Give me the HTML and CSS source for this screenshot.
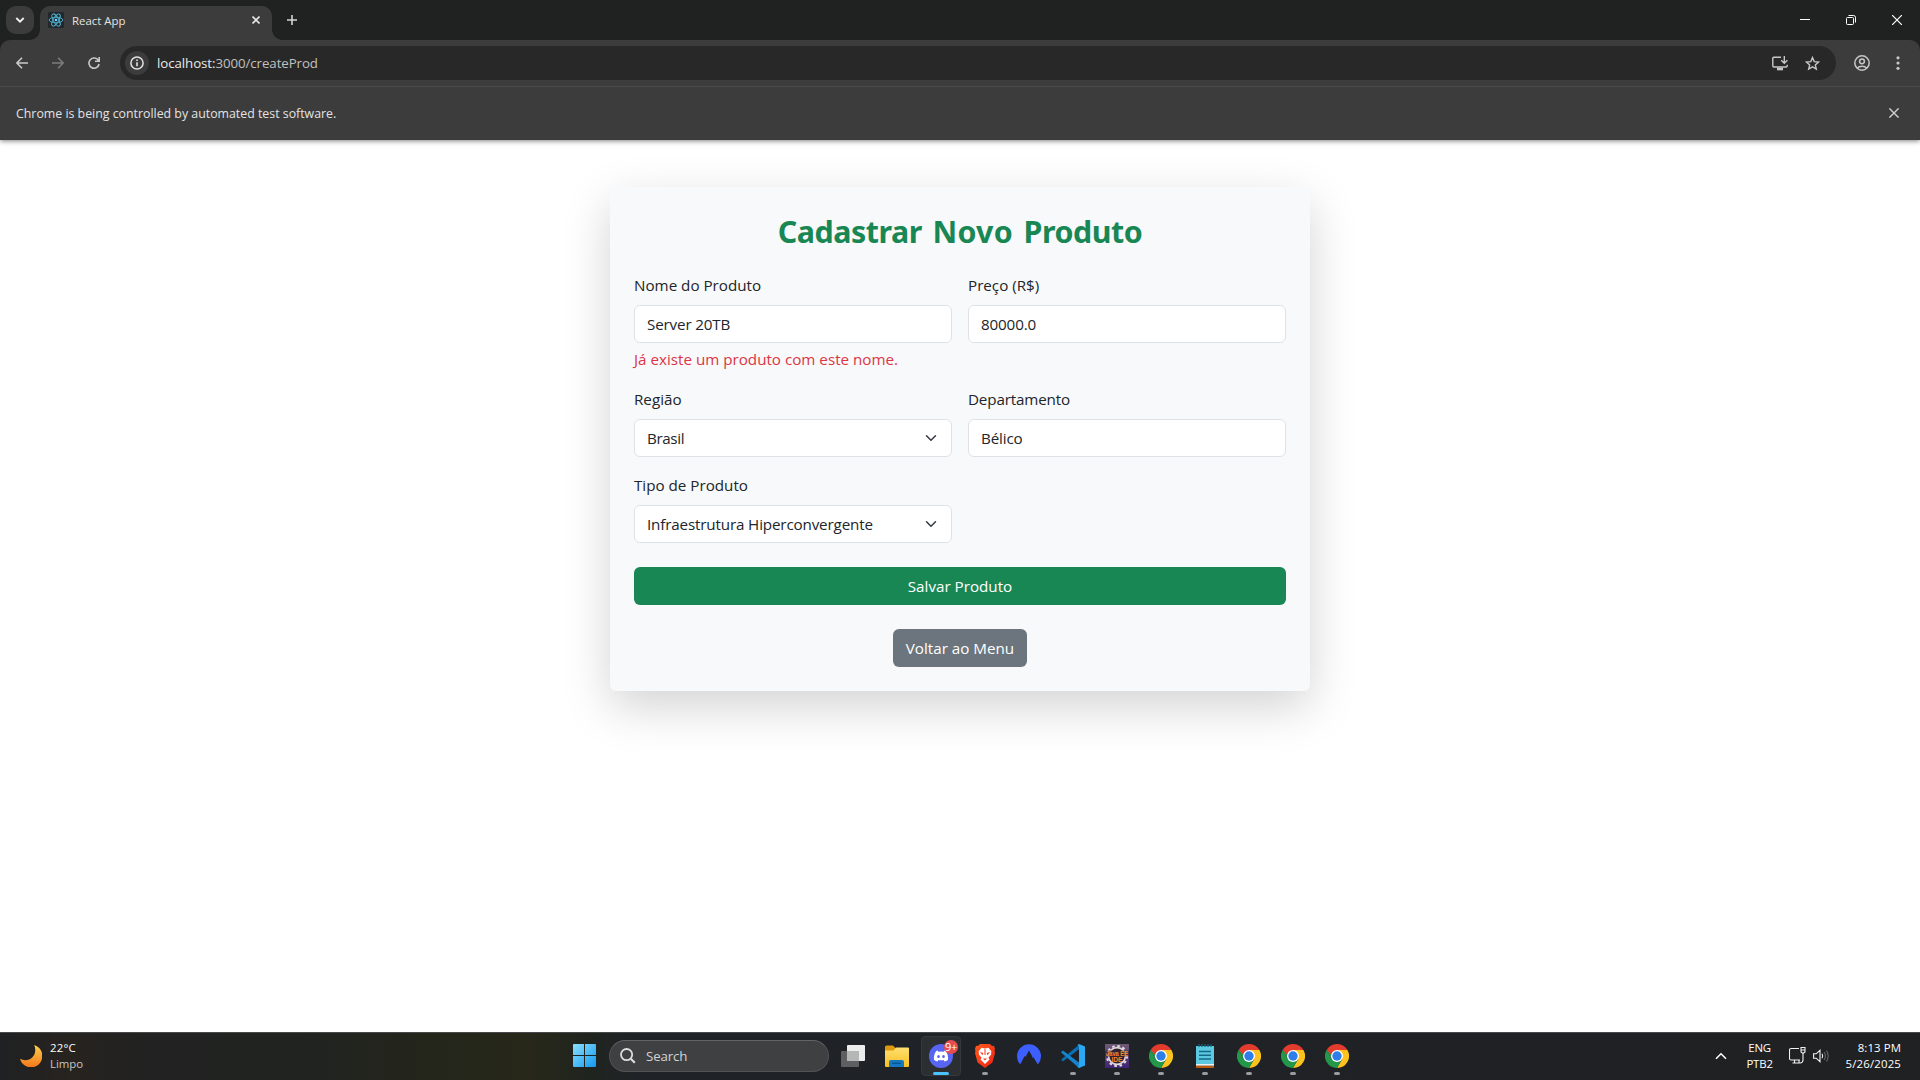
FILE: index.html
```
<!DOCTYPE html>
<html lang="pt-BR">
<head>
<meta charset="utf-8">
<title>React App</title>
<link rel="stylesheet" href="styles.css">
</head>
<body>
<svg class="defs" width="0" height="0">
  <defs>
    <linearGradient id="win" x1="0" y1="0" x2="1" y2="1"><stop offset="0" stop-color="#8ae0fd"/><stop offset="1" stop-color="#1299f0"/></linearGradient>
    <linearGradient id="moon" x1="0" y1="0" x2="0" y2="1"><stop offset="0" stop-color="#fcd04a"/><stop offset="1" stop-color="#f3771c"/></linearGradient>
    <linearGradient id="folder" x1="0" y1="0" x2="0" y2="1"><stop offset="0" stop-color="#ffdf70"/><stop offset="1" stop-color="#f9c022"/></linearGradient>
    <linearGradient id="brave" x1="0" y1="0" x2="1" y2="1"><stop offset="0" stop-color="#ff5a1f"/><stop offset="1" stop-color="#f01f12"/></linearGradient>
    <linearGradient id="java" x1="0" y1="0" x2="0" y2="1"><stop offset="0" stop-color="#6f5a74"/><stop offset="1" stop-color="#3f2476"/></linearGradient>
    <symbol id="chrome" viewBox="0 0 24 24">
      <path d="M12 6h10.4A12 12 0 0 1 12 24l5.2-9Z" fill="#fcc31e"/>
      <path d="M1.6 6A12 12 0 0 0 12 24l5.2-9L12 12 6.8 15Z" fill="#24984a"/>
      <path d="M1.6 6A12 12 0 0 1 22.4 6H12L6.8 9v6Z" fill="#e33b2e"/>
      <path d="M1.6 6 6.8 15l1-3Z" fill="#24984a"/>
      <circle cx="12" cy="12" r="6" fill="#fff"/><circle cx="12" cy="12" r="4.7" fill="#2f7de9"/>
    </symbol>
  </defs>
</svg>

<div class="desktop">
  <header class="browser">
    <div class="tabstrip">
      <button class="tab-search"><svg width="10" height="10" viewBox="0 0 10 10"><path d="M1.3 3 5 6.7 8.7 3" fill="none" stroke="#f0f0f0" stroke-width="1.9"/></svg></button>
      <div class="tab">
        <svg class="favicon" width="16" height="16" viewBox="0 0 16 16"><rect width="16" height="16" rx="1.5" fill="#22272e"/><g fill="none" stroke="#4fb6d2" stroke-width=".9"><ellipse cx="8" cy="8" rx="6.9" ry="2.7"/><ellipse cx="8" cy="8" rx="6.9" ry="2.7" transform="rotate(60 8 8)"/><ellipse cx="8" cy="8" rx="6.9" ry="2.7" transform="rotate(120 8 8)"/></g><circle cx="8" cy="8" r="1.3" fill="#61dafb"/></svg>
        <span class="tab-title">React App</span>
        <svg class="tab-close" width="8" height="8" viewBox="0 0 8 8"><path d="m.5.5 7 7m0-7-7 7" stroke="#e4e4e4" stroke-width="1.6"/></svg>
      </div>
      <svg class="new-tab" width="10" height="10" viewBox="0 0 10 10"><path d="M5 0v10M0 5h10" stroke="#d4d4d4" stroke-width="1.6"/></svg>
      <div class="window-controls">
        <svg width="10" height="10" viewBox="0 0 10 10"><path d="M0 4.5h10" stroke="#fff"/></svg>
        <svg width="10" height="10" viewBox="0 0 10 10" fill="none" stroke="#fff"><rect x=".5" y="2.5" width="7" height="7" rx="1"/><path d="M2.5.5h5a2 2 0 0 1 2 2v5"/></svg>
        <svg width="10" height="10" viewBox="0 0 10 10"><path d="m0 0 10 10M10 0 0 10" stroke="#fff" stroke-width="1.2"/></svg>
      </div>
    </div>
    <div class="toolbar">
      <svg class="nav-icon" width="12" height="12" viewBox="0 0 12 12"><path d="M12 6H1.2M6 .8.9 6 6 11.2" fill="none" stroke="#c9c9c9" stroke-width="1.6"/></svg>
      <svg class="nav-icon" width="12" height="12" viewBox="0 0 12 12"><path d="M0 6h10.8M6 .8 11.1 6 6 11.2" fill="none" stroke="#7c7c7c" stroke-width="1.6"/></svg>
      <svg class="nav-icon" width="12" height="12" viewBox="0 0 12 12"><path d="M10.4 3.4A5.1 5.1 0 1 0 11.1 7M11.2 0v4.3H7" fill="none" stroke="#c9c9c9" stroke-width="1.6"/></svg>
      <div class="omnibox">
        <span class="site-info"><svg width="14" height="14" viewBox="0 0 14 14"><circle cx="7" cy="7" r="6.1" fill="none" stroke="#e3e3e3" stroke-width="1.5"/><path d="M7 6.2v4M7 3.5V5" stroke="#e3e3e3" stroke-width="1.6"/></svg></span>
        <span class="url">localhost:<span class="url-path">3000/createProd</span></span>
        <svg width="16" height="15" viewBox="0 0 16 15" fill="none" stroke="#c7c7c7" stroke-width="1.4"><path d="M9 1.2H1.8a1 1 0 0 0-1 1V10a1 1 0 0 0 1 1h12.4a1 1 0 0 0 1-1V8.8M12.3 0v7M9.2 4.2l3.1 3.1 3.1-3.1"/><path d="M5 13h6" stroke-width="2.6"/></svg>
        <svg class="star" width="15" height="15" viewBox="0 0 15 15"><path d="m7.5 1.6 1.7 4 4.4.4-3.3 2.9 1 4.2-3.8-2.2-3.8 2.2 1-4.2L1.4 6l4.4-.4Z" fill="none" stroke="#c7c7c7" stroke-width="1.4"/></svg>
      </div>
      <svg class="profile" width="16" height="16" viewBox="0 0 16 16" fill="none" stroke="#c7c7c7" stroke-width="1.5"><circle cx="8" cy="8" r="7.2"/><circle cx="8" cy="6.3" r="2.4"/><path d="M3 13.2c2.6-2.6 7.4-2.6 10 0"/></svg>
      <svg class="menu" width="4" height="14" viewBox="0 0 4 14" fill="#c7c7c7"><circle cx="2" cy="1.8" r="1.6"/><circle cx="2" cy="7" r="1.6"/><circle cx="2" cy="12.3" r="1.6"/></svg>
    </div>
    <div class="infobar">
      <span>Chrome is being controlled by automated test software.</span>
      <svg width="10" height="10" viewBox="0 0 10 10"><path d="m.4.4 9.2 9.2m0-9.2L.4 9.6" stroke="#d0d0d0" stroke-width="1.4"/></svg>
    </div>
  </header>

  <main class="page">
    <form class="card">
      <h2 class="card-title">Cadastrar <span class="wide">Novo</span> Produto</h2>
      <div class="fields">
        <div class="field">
          <label>Nome do Produto</label>
          <div class="control">Server 20TB</div>
          <div class="error">Já existe um produto com este nome.</div>
        </div>
        <div class="field">
          <label>Preço (R$)</label>
          <div class="control">80000.0</div>
        </div>
        <div class="field">
          <label>Região</label>
          <div class="control select short">Brasil<svg width="16" height="12" viewBox="0 0 16 16"><path d="m2 5 6 6 6-6" fill="none" stroke="#343a40" stroke-width="2" stroke-linecap="round" stroke-linejoin="round"/></svg></div>
        </div>
        <div class="field">
          <label class="tight">Departamento</label>
          <div class="control">Bélico</div>
        </div>
        <div class="field">
          <label>Tipo de Produto</label>
          <div class="control select">Infraestrutura Hiperconvergente<svg width="16" height="12" viewBox="0 0 16 16"><path d="m2 5 6 6 6-6" fill="none" stroke="#343a40" stroke-width="2" stroke-linecap="round" stroke-linejoin="round"/></svg></div>
        </div>
      </div>
      <button type="button" class="btn btn-save">Salvar Produto</button>
      <button type="button" class="btn btn-back">Voltar ao Menu</button>
    </form>
  </main>

  <footer class="taskbar">
    <div class="weather">
      <svg width="22" height="22" viewBox="0 0 22 22"><path d="M14.2 0A11.4 11.4 0 1 1 0 13.8C4 16.2 9.4 15.5 12.6 12 15.6 8.6 16 4 14.2 0Z" fill="url(#moon)"/></svg>
      <div class="weather-text"><span class="temp">22°C</span><span class="sky">Limpo</span></div>
    </div>
    <div class="apps">
      <div class="app start"><svg width="23" height="23" viewBox="0 0 23 23" fill="url(#win)"><path d="M0 1a1 1 0 0 1 1-1h10v11H0ZM12 0h10a1 1 0 0 1 1 1v10H12ZM0 12h11v11H1a1 1 0 0 1-1-1ZM12 12h11v10a1 1 0 0 1-1 1H12Z"/></svg></div>
      <div class="search"><svg width="16" height="16" viewBox="0 0 16 16" fill="none" stroke="#dcdcdc" stroke-width="1.8"><circle cx="6.6" cy="6.6" r="5.6"/><path d="m10.8 10.8 4 4" stroke-width="2.2"/></svg><span>Search</span></div>
      <div class="app"><svg width="24" height="24" viewBox="0 0 24 24"><rect x="6" y="1" width="18" height="16" rx="1" fill="#ececec"/><rect y="7" width="18" height="16" rx="1" fill="#5e5f60"/><path d="M6 7h12v10H6Z" fill="#b5b6b6"/></svg></div>
      <div class="app"><svg width="24" height="24" viewBox="0 0 24 24"><path d="M0 3a1.5 1.5 0 0 1 1.5-1.5H8L11 4.5h11V10H0Z" fill="#dc9a0c"/><path d="M0 6.500h8.500L11 3.500h12a1 1 0 0 1 1 1V22a1 1 0 0 1-1 1H1a1 1 0 0 1-1-1Z" fill="url(#folder)"/><path d="M4 23v-5a2 2 0 0 1 2-2h11a2 2 0 0 1 2 2v5Z" fill="#1478c4"/><path d="M7 19.300h9" stroke="#0b558f" stroke-width="1.4"/></svg></div>
      <div class="app active">
        <svg width="24" height="24" viewBox="0 0 24 24"><circle cx="12" cy="12" r="12" fill="#5865f2"/><path d="M8.600 6.600 7.200 7C5.300 9.700 4.700 13 5 15.700c1.200 1 2.500 1.500 3.500 1.700l.9-1.500c1.700.4 3.500.4 5.200 0l.9 1.500c1-.2 2.300-.7 3.500-1.700.3-2.700-.3-6-2.200-8.700l-1.400-.4-.8 1.200a11 11 0 0 0-5.200 0Z" fill="#fff"/><ellipse cx="9.500" cy="12.400" rx="1.300" ry="1.500" fill="#5865f2"/><ellipse cx="14.500" cy="12.400" rx="1.300" ry="1.500" fill="#5865f2"/></svg>
        <span class="badge">9+</span>
      </div>
      <div class="app running"><svg width="24" height="24" viewBox="0 0 24 24"><path d="M7 0h10l2 2 2-.2L22 5l-.5 2 .5 2-2.600 9.500L12 24l-7.400-5.500L2 9l.5-2L2 5l1-3.200L5 2Z" fill="url(#brave)"/><path d="M12 4.500 15.500 3.700l2.800 3.500-.2 3.300-2.600 3.300 1 1.700-4.500 4.400-4.500-4.400 1-1.700-2.600-3.300-.2-3.300 2.800-3.500Z" fill="#fff"/><path d="m7 8 3.300.9-.8 2.300ZM17 8l-3.300.9.8 2.300ZM10 14.500h4L12 16.500ZM11.500 5h1v6h-1Z" fill="#f4391c"/></svg></div>
      <div class="app"><svg width="24" height="24" viewBox="0 0 24 24"><path d="M3.200 20.500A12 12 0 1 1 20.800 20.500L16.200 12.700l-1.100 1.700.2-2L12 6.500 8.500 13l-.9-1Z" fill="#3e5fff"/></svg></div>
      <div class="app running"><svg width="24" height="24" viewBox="0 0 24 24"><path d="m1.800 6.600 16.200 12.200v4.500L.2 8.400Z" fill="#1f8dd6"/><path d="M1.800 17.400 18 5.200V.7L.2 15.600Z" fill="#0b6fb5"/><path d="m.3 8.300 1.500-1.600L18 18.700V24Z" fill="#1583cd"/><path d="M18 0 24 2.500v19L18 24l-1.500-1 1.500-1.500v-19L16.500 1Z" fill="#2ba7f3"/></svg></div>
      <div class="app running"><svg class="ide" width="24" height="24" viewBox="0 0 24 24"><rect width="24" height="24" fill="url(#java)"/><circle cx="12" cy="12" r="10" fill="none" stroke="#ded7dc" stroke-width="2.2" stroke-dasharray="2.6 2.636"/><circle cx="12" cy="12" r="8.400" fill="#35222e" stroke="#ded7dc" stroke-width="1.600"/><path d="M0 6.500h24v6H0Z" fill="#35222e" opacity=".65"/><g fill="#f5862a" class="ide-text"><text x="1" y="11.600" textLength="22" lengthAdjust="spacingAndGlyphs">Java EE</text><text x="6.500" y="18" textLength="11" lengthAdjust="spacingAndGlyphs">IDE</text></g></svg></div>
      <div class="app running"><svg width="24" height="24"><use href="#chrome"/></svg></div>
      <div class="app running"><svg width="18" height="24" viewBox="0 0 18 24"><path d="M0 2h18v18H0Z" fill="#5dc8e2"/><path d="M0 20h18v1.800H0Z" fill="#f0f0ee"/><path d="M0 21.800h18V24H0Z" fill="#b65a12"/><path d="M3 0v3m3-3v3m3-3v3m3-3v3m3-3v3" stroke="#15647c" stroke-width="1.3"/><path d="M3 7.500h12M3 11.300h12M3 15.100h12" stroke="#136a86" stroke-width="1.5"/></svg></div>
      <div class="app running"><svg width="24" height="24"><use href="#chrome"/></svg></div>
      <div class="app running"><svg width="24" height="24"><use href="#chrome"/></svg></div>
      <div class="app running"><svg width="24" height="24"><use href="#chrome"/></svg></div>
    </div>
    <div class="tray">
      <svg class="chevron" width="12" height="8" viewBox="0 0 12 8"><path d="M1 6.800 6 1.700l5 5.100" fill="none" stroke="#fff" stroke-width="1.5"/></svg>
      <div class="lang"><span>ENG</span><span>PTB2</span></div>
      <svg class="network" width="17" height="17" viewBox="0 0 17 17" fill="none" stroke="#f2f2f2" stroke-width="1.1"><path d="M10 1.500H2A1.500 1.500 0 0 0 .5 3v8.500A1.500 1.500 0 0 0 2 13h9M5.500 13v3M10 13v3M3.500 16h8M12 .5h4V5l-2 1.500L12 5ZM14 6.500V13q0 2.500-2.500 3M12.500 3h3"/></svg>
      <svg class="volume" width="17" height="14" viewBox="0 0 17 14" fill="none" stroke="#f2f2f2" stroke-width="1.1"><path d="M.6 4.800h2.600L7 1.300v11.400L3.200 9.200H.6ZM9 4.800q1.400 2.200 0 4.400"/><path d="M11.200 3q2.500 4 0 8M13.500 1.500q3.500 5.500 0 11" stroke="#666"/></svg>
      <div class="clock"><span>8:13 PM</span><span class="date">5/26/2025</span></div>
    </div>
  </footer>
</div>
</body>
</html>
```
FILE: styles.css
```
* { box-sizing: border-box; }
body { margin: 0; font-family: "Open Sans", "Noto Sans", sans-serif; background: #fff; }
svg { display: block; flex: none; }
button { font: inherit; border: 0; padding: 0; }
.defs { position: absolute; }
.desktop { width: 1920px; height: 1080px; display: flex; flex-direction: column; overflow: hidden; }

/* Browser window */
.browser { height: 140px; flex: none; background: #202221; color: #e3e3e3; box-shadow: 0 1px 5px rgba(0, 0, 0, .5); z-index: 1; }
.tabstrip { height: 40px; display: flex; align-items: center; padding: 0 13px 0 6px; }
.tab-search { width: 28px; height: 28px; border-radius: 10px; background: #3c3c3c; display: grid; place-items: center; }
.tab { position: relative; width: 232px; height: 34px; margin: 6px 0 0 6px; padding: 0 12px 6px 8px; border-radius: 10px 10px 0 0; background: #3c3c3c; display: flex; align-items: center; }
.tab::before, .tab::after { content: ""; position: absolute; bottom: 0; width: 10px; height: 10px; }
.tab::before { left: -10px; background: radial-gradient(circle at 0 0, transparent 9.5px, #3c3c3c 10px); }
.tab::after { right: -10px; background: radial-gradient(circle at 100% 0, transparent 9.5px, #3c3c3c 10px); }
.tab-title { font-size: 11.4px; margin-left: 8px; flex: 1; padding-top: 1px; }
.new-tab { margin-left: 15px; }
.window-controls { margin-left: auto; margin-right: 5px; display: flex; gap: 36px; }
.toolbar { height: 47px; background: #3c3c3c; border-radius: 10px 10px 0 0; border-bottom: 1px solid #4a4a4a; display: flex; align-items: center; padding: 0 20px 0 16px; }
.nav-icon { margin-right: 24px; }
.omnibox { width: 1716px; height: 34px; margin-left: -4px; border-radius: 17px; background: #282828; display: flex; align-items: center; padding: 0 16px 0 5px; }
.site-info { width: 24px; height: 24px; border-radius: 50%; background: #3c3c3c; display: grid; place-items: center; }
.url { margin-left: 8px; flex: 1; font-size: 13.3px; letter-spacing: -.08px; color: #e8e8e8; }
.url-path { color: #c0c0c0; }
.star { margin-left: 17px; }
.profile { margin-left: 18px; }
.menu { margin-left: 26px; }
.infobar { height: 53px; background: #3c3c3c; display: flex; align-items: center; justify-content: space-between; padding: 0 21px 1px 16px; font-size: 12.35px; }

/* Product form */
.page { flex: 1; padding-top: 46.6px; }
.card { width: 700px; margin: 0 auto; padding: 24px; border-radius: 6px; background: #f8f9fa; box-shadow: 0 16px 48px rgba(0, 0, 0, .175); color: #212529; font-size: 15.2px; line-height: 24px; }
.card-title { height: 38.4px; margin: 0 0 24px; padding-top: 2px; font: 700 30.4px/38.4px "Noto Sans", "Open Sans", sans-serif; letter-spacing: -.45px; word-spacing: 3px; color: #198754; text-align: center; }
.wide { letter-spacing: .3px; }
.fields { display: grid; grid-template-columns: 1fr 1fr; gap: 16px; }
.field label { display: block; margin-bottom: 8px; }
.field .tight { letter-spacing: -.15px; }
.control { height: 38px; padding: 6px 12px; border: 1px solid #dee2e6; border-radius: 6px; background: #fff; letter-spacing: -.15px; }
.select { display: flex; align-items: center; justify-content: space-between; }
.short { letter-spacing: -.38px; }
.error { margin-top: 4px; color: #dc3545; }
.btn { display: block; height: 38px; border-radius: 6px; color: #fff; line-height: 24px; }
.btn-save { width: 100%; margin-top: 24px; background: #198754; }
.btn-back { width: 134px; margin: 24px auto 0; background: #6c757d; }

/* Windows taskbar */
.taskbar { height: 48px; flex: none; display: grid; grid-template-columns: 564px auto 1fr; align-items: center; padding-bottom: 2px; border-top: 1px solid #48494a; color: #fff; font-size: 11.4px; line-height: 16px; background: linear-gradient(90deg, #202123 0, #27231f 70px, #212221 150px, #212321 300px, #24261b 440px, #27281a 530px, #20241f 590px, #1f2328 640px, #1f2226 1200px, #1f2122 1920px); }
.weather { display: flex; align-items: center; gap: 8px; padding-left: 20px; }
.weather-text { display: flex; flex-direction: column; }
.temp { letter-spacing: .2px; }
.sky { color: #c5c5c5; }
.apps { display: flex; gap: 4px; align-items: center; height: 45px; }
.app { position: relative; width: 40px; height: 40px; display: grid; place-items: center; border-radius: 4px; }
.start { margin-right: 1px; }
.search { width: 220px; height: 32px; border-radius: 16px; background: #3e4042; border: 1px solid #505254; border-top-color: #626466; display: flex; align-items: center; gap: 10px; padding-left: 10px; font-size: 13.3px; letter-spacing: -.15px; color: #d2d2d2; }
.active { background: #2c2f32; border: 1px solid #36393c; }
.running::after, .active::after { content: ""; position: absolute; bottom: 1px; left: 17px; width: 6px; height: 3px; border-radius: 2px; background: #999b9d; }
.active::after { left: 11px; bottom: 0; width: 16px; background: #4cc2ff; }
.badge { position: absolute; left: 22px; top: 3px; width: 14px; height: 14px; border-radius: 50%; background: #e64b4f; font-size: 11px; line-height: 13px; letter-spacing: -.4px; text-align: center; }
.ide { overflow: visible; }
.ide-text { font: 700 7px "Liberation Sans", sans-serif; }
.tray { display: flex; align-items: center; justify-content: flex-end; padding-right: 19px; }
.chevron { margin-right: 19px; }
.lang { display: flex; flex-direction: column; align-items: center; width: 28px; margin-right: 15px; letter-spacing: -.15px; }
.network { margin-right: 7px; }
.volume { margin-right: 16px; }
.clock { display: flex; flex-direction: column; align-items: flex-end; letter-spacing: .1px; }
.date { letter-spacing: .16px; }
```
